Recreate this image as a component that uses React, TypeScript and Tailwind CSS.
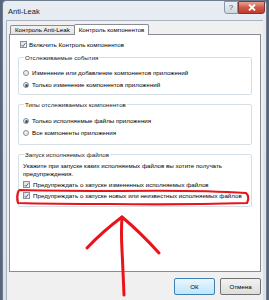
import React from 'react';

const font = { fontFamily: '"Liberation Sans", Arial, sans-serif' };

function CheckBox() {
  return (
    <span className="w-[7px] h-[7px] border border-[#8e8f8f] bg-gradient-to-br from-[#dcdcdc] to-[#fbfbfb] flex items-center justify-center shrink-0">
      <svg width="6" height="6" viewBox="0 0 6 6">
        <path d="M0.8 3.2 L2.3 4.8 L5.2 0.9" stroke="#4a5f97" strokeWidth="1.2" fill="none" />
      </svg>
    </span>
  );
}

function Radio({ checked }: { checked?: boolean }) {
  return (
    <span className="w-[6px] h-[6px] rounded-full border border-[#8e8f8f] bg-[#ececec] flex items-center justify-center shrink-0">
      {checked && <span className="w-[3px] h-[3px] rounded-full bg-[#2a5d92]" />}
    </span>
  );
}

function Group({ title, children, className }: { title: string; children: React.ReactNode; className?: string }) {
  return (
    <fieldset className={`border border-[#d5dfe5] rounded-[2px] px-[4px] ${className ?? ''}`}>
      <legend className="ml-[1px] px-[1px] leading-[9px] text-[#1a1a1a] whitespace-nowrap">{title}</legend>
      {children}
    </fieldset>
  );
}

export default function App() {
  return (
    <div className="w-[269px] h-[300px] overflow-hidden bg-[#58657c] relative text-[6.2px] text-black" style={font}>
      <div className="absolute left-[2px] top-0 w-[265px] h-[302px] border border-[#6f7c8e] rounded-t-[4px] bg-gradient-to-b from-[#e8edf3] via-[#dce4ec] to-[#d8e0e9] flex flex-col">
        {/* title bar */}
        <div className="h-[19px] flex items-start shrink-0">
          <span className="pl-[5px] pt-[5px] text-[7.5px] text-[#1b1b1b]">Anti-Leak</span>
          <div className="ml-auto mr-[1px] flex">
            <div className="w-[14px] h-[13px] border border-[#8a96a8] rounded-bl-[3px] bg-gradient-to-b from-[#eef2f6] to-[#cdd6e0] flex items-center justify-center text-[8px] text-[#4d5a6c]">?</div>
            <div className="w-[27px] h-[13px] border border-[#7a3a33] rounded-br-[3px] bg-gradient-to-b from-[#e8a293] via-[#cf5a45] to-[#c0392b] flex items-center justify-center">
              <svg width="8" height="7" viewBox="0 0 8 7">
                <path d="M1 0.5 L7 6.5 M7 0.5 L1 6.5" stroke="#ffffff" strokeWidth="1.8" />
              </svg>
            </div>
          </div>
        </div>

        {/* client area */}
        <div className="mx-[3px] flex-1 bg-[#f0f0f0] border-t border-l border-[#a9b3bf] pl-[2px] pr-[2px] pt-[2px] flex flex-col">
          <div className="flex items-end h-[11px] relative z-10 whitespace-nowrap">
            <div className="h-[9px] px-[4px] border border-b-0 border-[#898c95] rounded-t-[2px] bg-gradient-to-b from-[#f2f2f2] to-[#e3e3e3] flex items-center ml-[1px]">
              Контроль Anti-Leak
            </div>
            <div className="h-[11px] px-[4px] border border-b-0 border-[#898c95] rounded-t-[2px] bg-white flex items-center -ml-[1px] -mb-[1px]">
              Контроль компонентов
            </div>
          </div>
          <div className="h-[238px] border border-[#898c95] bg-white px-[8px] pt-[4px] flex flex-col whitespace-nowrap">
            <div className="h-[11px] flex items-center gap-[2px] pl-[2px]">
              <CheckBox />
              <span>Включить Контроль компонентов</span>
            </div>

            <Group title="Отслеживаемые события" className="mt-[3px] pt-[5px] pb-[3px]">
              <div className="h-[12px] flex items-center gap-[3px]">
                <Radio />
                <span>Изменение или добавление компонентов приложений</span>
              </div>
              <div className="h-[12px] flex items-center gap-[3px]">
                <Radio checked />
                <span>Только изменение компонентов приложений</span>
              </div>
            </Group>

            <Group title="Типы отслеживаемых компонентов" className="mt-[5px] pt-[6px] pb-[5px]">
              <div className="h-[12px] flex items-center gap-[3px]">
                <Radio checked />
                <span>Только исполняемые файлы приложения</span>
              </div>
              <div className="h-[12px] flex items-center gap-[3px]">
                <Radio />
                <span>Все компоненты приложения</span>
              </div>
            </Group>

            <Group title="Запуск исполняемых файлов" className="mt-[5px] pt-[3px] pb-[5px]">
              <p className="leading-[8px]">
                Укажите при запуске каких исполняемых файлов вы хотите получать
                <br />
                предупреждения.
              </p>
              <div className="h-[11px] mt-[1px] flex items-center gap-[3px]">
                <CheckBox />
                <span>Предупреждать о запуске измененных исполняемых файлов</span>
              </div>
              <div className="h-[11px] flex items-center gap-[3px]">
                <CheckBox />
                <span>Предупреждать о запуске новых или неизвестных исполняемых файлов</span>
              </div>
            </Group>
          </div>

          <div className="flex justify-end gap-[5px] mt-[6px]">
            <button className="w-[41px] h-[17px] rounded-[2px] border border-[#3c7fb1] bg-gradient-to-b from-[#eaf6fd] to-[#bee6fd] text-[6.2px]">
              ОК
            </button>
            <button className="w-[41px] h-[17px] rounded-[2px] border border-[#707070] bg-gradient-to-b from-[#f2f2f2] to-[#dddddd] text-[6.2px]">
              Отмена
            </button>
          </div>
        </div>
      </div>

      {/* red annotation */}
      <svg className="absolute left-0 top-0 pointer-events-none" width="269" height="300" viewBox="0 0 269 300">
        <path
          d="M19 190 Q60 191 120 191 Q200 190 246 193 Q250 197 247 203 Q180 205 110 204 Q50 204 18 203 Q16 196 19 190"
          stroke="#e8141c"
          strokeWidth="2.2"
          fill="none"
          strokeLinejoin="round"
        />
        <path
          d="M124 295 Q123 270 122 250 Q121 232 122 217"
          stroke="#e8141c"
          strokeWidth="3"
          fill="none"
          strokeLinecap="round"
        />
        <path
          d="M87 248 Q102 232 122 217 Q140 232 159 253"
          stroke="#e8141c"
          strokeWidth="3"
          fill="none"
          strokeLinecap="round"
          strokeLinejoin="round"
        />
      </svg>
    </div>
  );
}
